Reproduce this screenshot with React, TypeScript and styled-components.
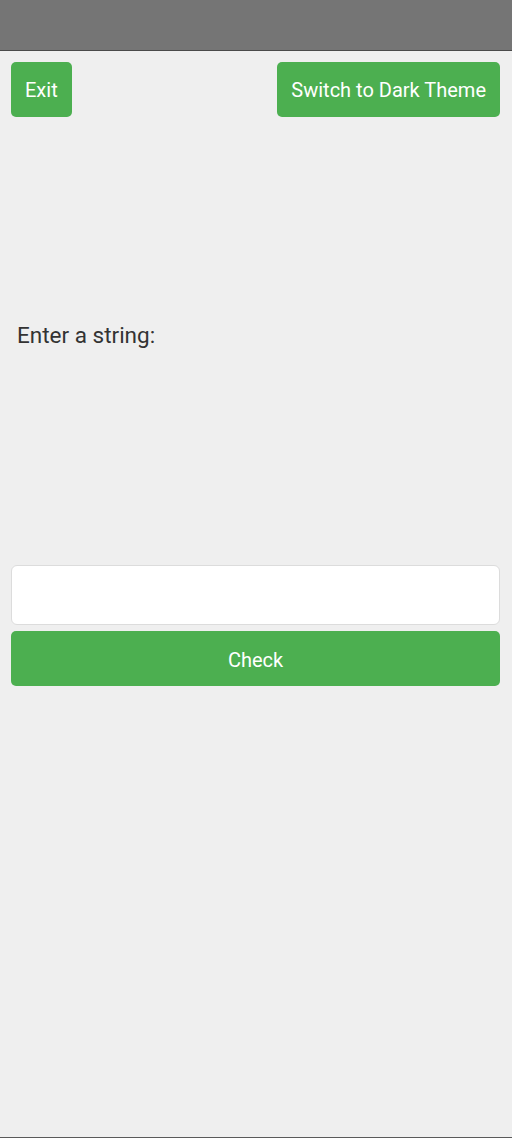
import React from "react";
import styled, { createGlobalStyle } from "styled-components";

const GlobalStyle = createGlobalStyle`
  html, body {
    margin: 0;
    padding: 0;
    background: #efefef;
  }
  body {
    font-family: Roboto, "Liberation Sans", Arial, sans-serif;
  }
  * { box-sizing: border-box; }
`;

const Page = styled.div`
  min-height: 1138px;
  display: flex;
  flex-direction: column;
  background: #efefef;
`;

const StatusBar = styled.div`
  height: 51px;
  background: #757575;
  border-bottom: 1px solid #4a4a4a;
  flex-shrink: 0;
`;

const Content = styled.main`
  display: flex;
  flex-direction: column;
  padding: 11px 12px 0 11px;
  flex: 1;
`;

const TopRow = styled.div`
  display: flex;
  justify-content: space-between;
  align-items: center;
`;

const GreenButton = styled.button<{ $full?: boolean; $height?: number }>`
  height: ${(p) => p.$height ?? 55}px;
  padding: 0 14px;
  background: #4caf50;
  color: #ffffff;
  border: none;
  border-radius: 5px;
  font-family: Roboto, "Liberation Sans", Arial, sans-serif;
  font-size: 20px;
  cursor: pointer;
  width: ${(p) => (p.$full ? "100%" : "auto")};
`;

const Label = styled.label`
  display: block;
  margin: 206px 0 0 6px;
  font-size: 22.5px;
  line-height: 24px;
  color: #333333;
`;

const TextInput = styled.input`
  margin-top: 218px;
  height: 60px;
  width: 100%;
  background: #ffffff;
  border: 1px solid #dcdcdc;
  border-radius: 6px;
  padding: 0 12px;
  font-size: 18px;
  font-family: Roboto, "Liberation Sans", Arial, sans-serif;
  outline: none;
`;

const CheckButton = styled(GreenButton)`
  margin-top: 6px;
  padding-top: 2px;
`;

const BottomEdge = styled.div`
  height: 1px;
  background: #5a5a5a;
  margin-top: auto;
  flex-shrink: 0;
`;

export default function App() {
  return (
    <>
      <GlobalStyle />
      <Page>
        <StatusBar />
        <Content>
          <TopRow>
            <GreenButton>Exit</GreenButton>
            <GreenButton>Switch to Dark Theme</GreenButton>
          </TopRow>
          <Label htmlFor="str">Enter a string:</Label>
          <TextInput id="str" type="text" />
          <CheckButton $full>Check</CheckButton>
        </Content>
        <BottomEdge />
      </Page>
    </>
  );
}
